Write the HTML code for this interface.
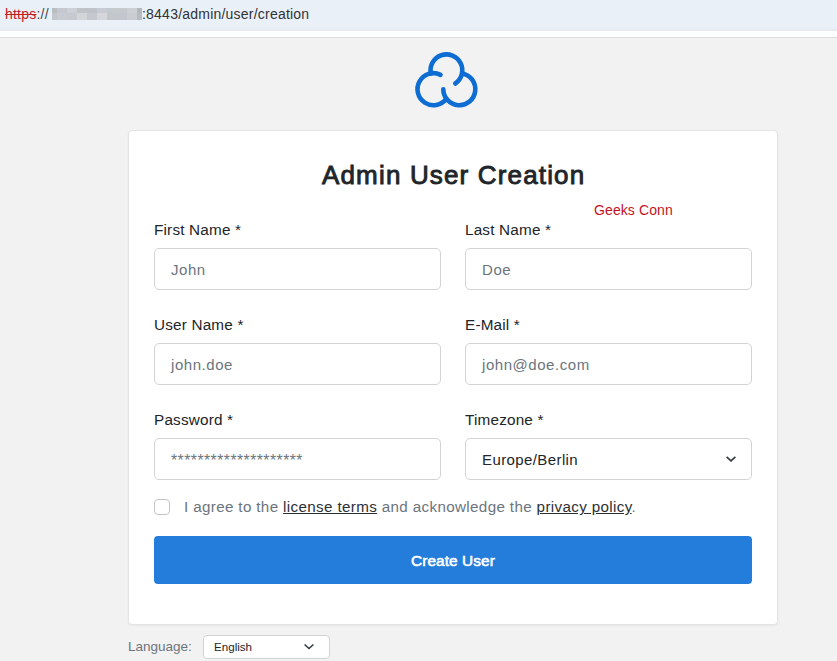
<!DOCTYPE html>
<html><head><meta charset="utf-8">
<style>
*{box-sizing:border-box}
html,body{margin:0;padding:0}
body{width:837px;height:661px;overflow:hidden;background:#f2f2f2;position:relative;font-family:"Liberation Sans",sans-serif;color:#212529}
.abs{position:absolute;white-space:nowrap;line-height:1}
#bar{position:absolute;left:0;top:0;width:837px;height:31px;background:#eaf0f8}
#strip{position:absolute;left:0;top:31px;width:837px;height:6px;background:#fdfefe}
#line{position:absolute;left:0;top:37px;width:837px;height:1px;background:#dcdcdc}
#card{position:absolute;left:128px;top:130px;width:650px;height:495px;background:#fff;border:1px solid #e4e4e4;border-radius:4px;box-shadow:0 1px 2px rgba(0,0,0,.05)}
.lbl{font-size:15.3px;letter-spacing:0.18px;color:#212529}
.inp{position:absolute;height:42px;width:287px;border:1px solid #d3d3d3;border-radius:5px;background:#fff}
.ph{font-size:15px;letter-spacing:0.55px;color:#6c757d}
.url{font-size:14px;letter-spacing:0.22px}
</style></head><body>
<div id="bar"></div><div style="position:absolute;left:0;top:29px;width:837px;height:2px;background:#e8ecf2"></div><div id="strip"></div><div id="line"></div>
<div class="abs url" style="left:5px;top:7.2px"><span style="color:#c5221f;text-decoration:line-through">https</span><span style="color:#474b50">://</span></div>
<div style="position:absolute;left:52px;top:8px;width:5px;height:5px;background:#b9bdc3"></div>
<div style="position:absolute;left:52px;top:13px;width:5px;height:7px;background:#c3c7cd"></div>
<div style="position:absolute;left:57px;top:8px;width:10px;height:5px;background:#c5c8ce"></div>
<div style="position:absolute;left:57px;top:13px;width:10px;height:7px;background:#c8cbd1"></div>
<div style="position:absolute;left:67px;top:8px;width:10px;height:5px;background:#cdd0d6"></div>
<div style="position:absolute;left:67px;top:13px;width:10px;height:7px;background:#c6c9cf"></div>
<div style="position:absolute;left:77px;top:8px;width:10px;height:5px;background:#c0c3c8"></div>
<div style="position:absolute;left:77px;top:13px;width:10px;height:7px;background:#d3d5d9"></div>
<div style="position:absolute;left:87px;top:8px;width:10px;height:5px;background:#bfc2c8"></div>
<div style="position:absolute;left:87px;top:13px;width:10px;height:7px;background:#c5c8ce"></div>
<div style="position:absolute;left:97px;top:8px;width:10px;height:5px;background:#c8cbd1"></div>
<div style="position:absolute;left:97px;top:13px;width:10px;height:7px;background:#d5d5dc"></div>
<div style="position:absolute;left:107px;top:8px;width:8px;height:5px;background:#c4c9cc"></div>
<div style="position:absolute;left:107px;top:13px;width:8px;height:7px;background:#c2c7ca"></div>
<div style="position:absolute;left:115px;top:8px;width:12px;height:5px;background:#c5c8cd"></div>
<div style="position:absolute;left:115px;top:13px;width:12px;height:7px;background:#c3c6cc"></div>
<div style="position:absolute;left:127px;top:8px;width:10px;height:5px;background:#cdd0d4"></div>
<div style="position:absolute;left:127px;top:13px;width:10px;height:7px;background:#c9ccd0"></div>
<div style="position:absolute;left:137px;top:8px;width:5px;height:5px;background:#b3b6bd"></div>
<div style="position:absolute;left:137px;top:13px;width:5px;height:7px;background:#b8bbc2"></div>
<div class="abs url" style="left:142px;top:7.2px;color:#303337">:8443/admin/user/creation</div>

<svg style="position:absolute;left:400px;top:40px" width="90" height="80" viewBox="0 0 90 80">
 <g fill="none" stroke="#0e6dd3" stroke-width="4.6" stroke-linecap="round">
  <path d="M30.80 33.44 A15.9 15.9 0 1 1 55.29 43.53"/>
  <path d="M62.16 33.46 A16.0 16.0 0 1 1 43.30 49.20"/>
  <path d="M46.39 58.67 A16.0 16.0 0 1 1 40.51 34.82"/>
 </g>
</svg>

<div id="card"></div>
<div class="abs" style="left:322px;top:162px;font-size:26px;-webkit-text-stroke:0.9px #212529;letter-spacing:1.16px;color:#212529">Admin User Creation</div>
<div class="abs" style="left:594px;top:203px;font-size:14px;letter-spacing:0.1px;color:#c3121f">Geeks Conn</div>

<div class="abs lbl" style="left:154px;top:222px">First Name *</div>
<div class="abs lbl" style="left:465px;top:222px">Last Name *</div>
<div class="inp" style="left:154px;top:248px"></div>
<div class="inp" style="left:465px;top:248px"></div>
<div class="abs ph" style="left:171px;top:262px">John</div>
<div class="abs ph" style="left:482px;top:262px">Doe</div>

<div class="abs lbl" style="left:154px;top:317px">User Name *</div>
<div class="abs lbl" style="left:465px;top:317px">E-Mail *</div>
<div class="inp" style="left:154px;top:343px"></div>
<div class="inp" style="left:465px;top:343px"></div>
<div class="abs ph" style="left:171px;top:357px">john.doe</div>
<div class="abs ph" style="left:482px;top:357px">john@doe.com</div>

<div class="abs lbl" style="left:154px;top:412px">Password *</div>
<div class="abs lbl" style="left:465px;top:412px">Timezone *</div>
<div class="inp" style="left:154px;top:438px"></div>
<div class="inp" style="left:465px;top:438px"></div>
<div class="abs ph" style="left:171px;top:453px;font-size:15.8px;letter-spacing:0.45px">********************</div>
<div class="abs" style="left:482px;top:452px;font-size:15px;letter-spacing:0.4px;color:#212529">Europe/Berlin</div>
<svg style="position:absolute;left:720px;top:450px" width="20" height="16" viewBox="0 0 20 16"><path d="M6.6 6.9 L11 10.9 L15.4 6.9" fill="none" stroke="#343a40" stroke-width="1.6"/></svg>

<div style="position:absolute;left:154px;top:499px;width:16px;height:16px;border:1px solid #c4c4c4;border-radius:4px;background:#fff"></div>
<div class="abs" style="left:184px;top:499.4px;font-size:15.2px;letter-spacing:0.355px;color:#6c757d">I agree to the <span style="color:#2d3136;text-decoration:underline">license terms</span> and acknowledge the <span style="color:#2d3136;text-decoration:underline">privacy policy</span>.</div>

<div style="position:absolute;left:154px;top:536px;width:598px;height:48px;background:#247dda;border-radius:4px"></div>
<div class="abs" style="left:411px;top:552.5px;font-size:15.4px;-webkit-text-stroke:0.55px #fff;letter-spacing:0.08px;color:#fff">Create User</div>

<div class="abs" style="left:128px;top:639.5px;font-size:13.5px;color:#6c757d">Language:</div>
<div style="position:absolute;left:203px;top:635px;width:127px;height:24px;border:1px solid #d3d3d3;border-radius:4px;background:#fff"></div>
<div class="abs" style="left:214px;top:641px;font-size:11.6px;color:#212529">English</div>
<svg style="position:absolute;left:300px;top:638px" width="20" height="16" viewBox="0 0 20 16"><path d="M4.6 6.5 L9 10.5 L13.4 6.5" fill="none" stroke="#343a40" stroke-width="1.6"/></svg>
</body></html>
